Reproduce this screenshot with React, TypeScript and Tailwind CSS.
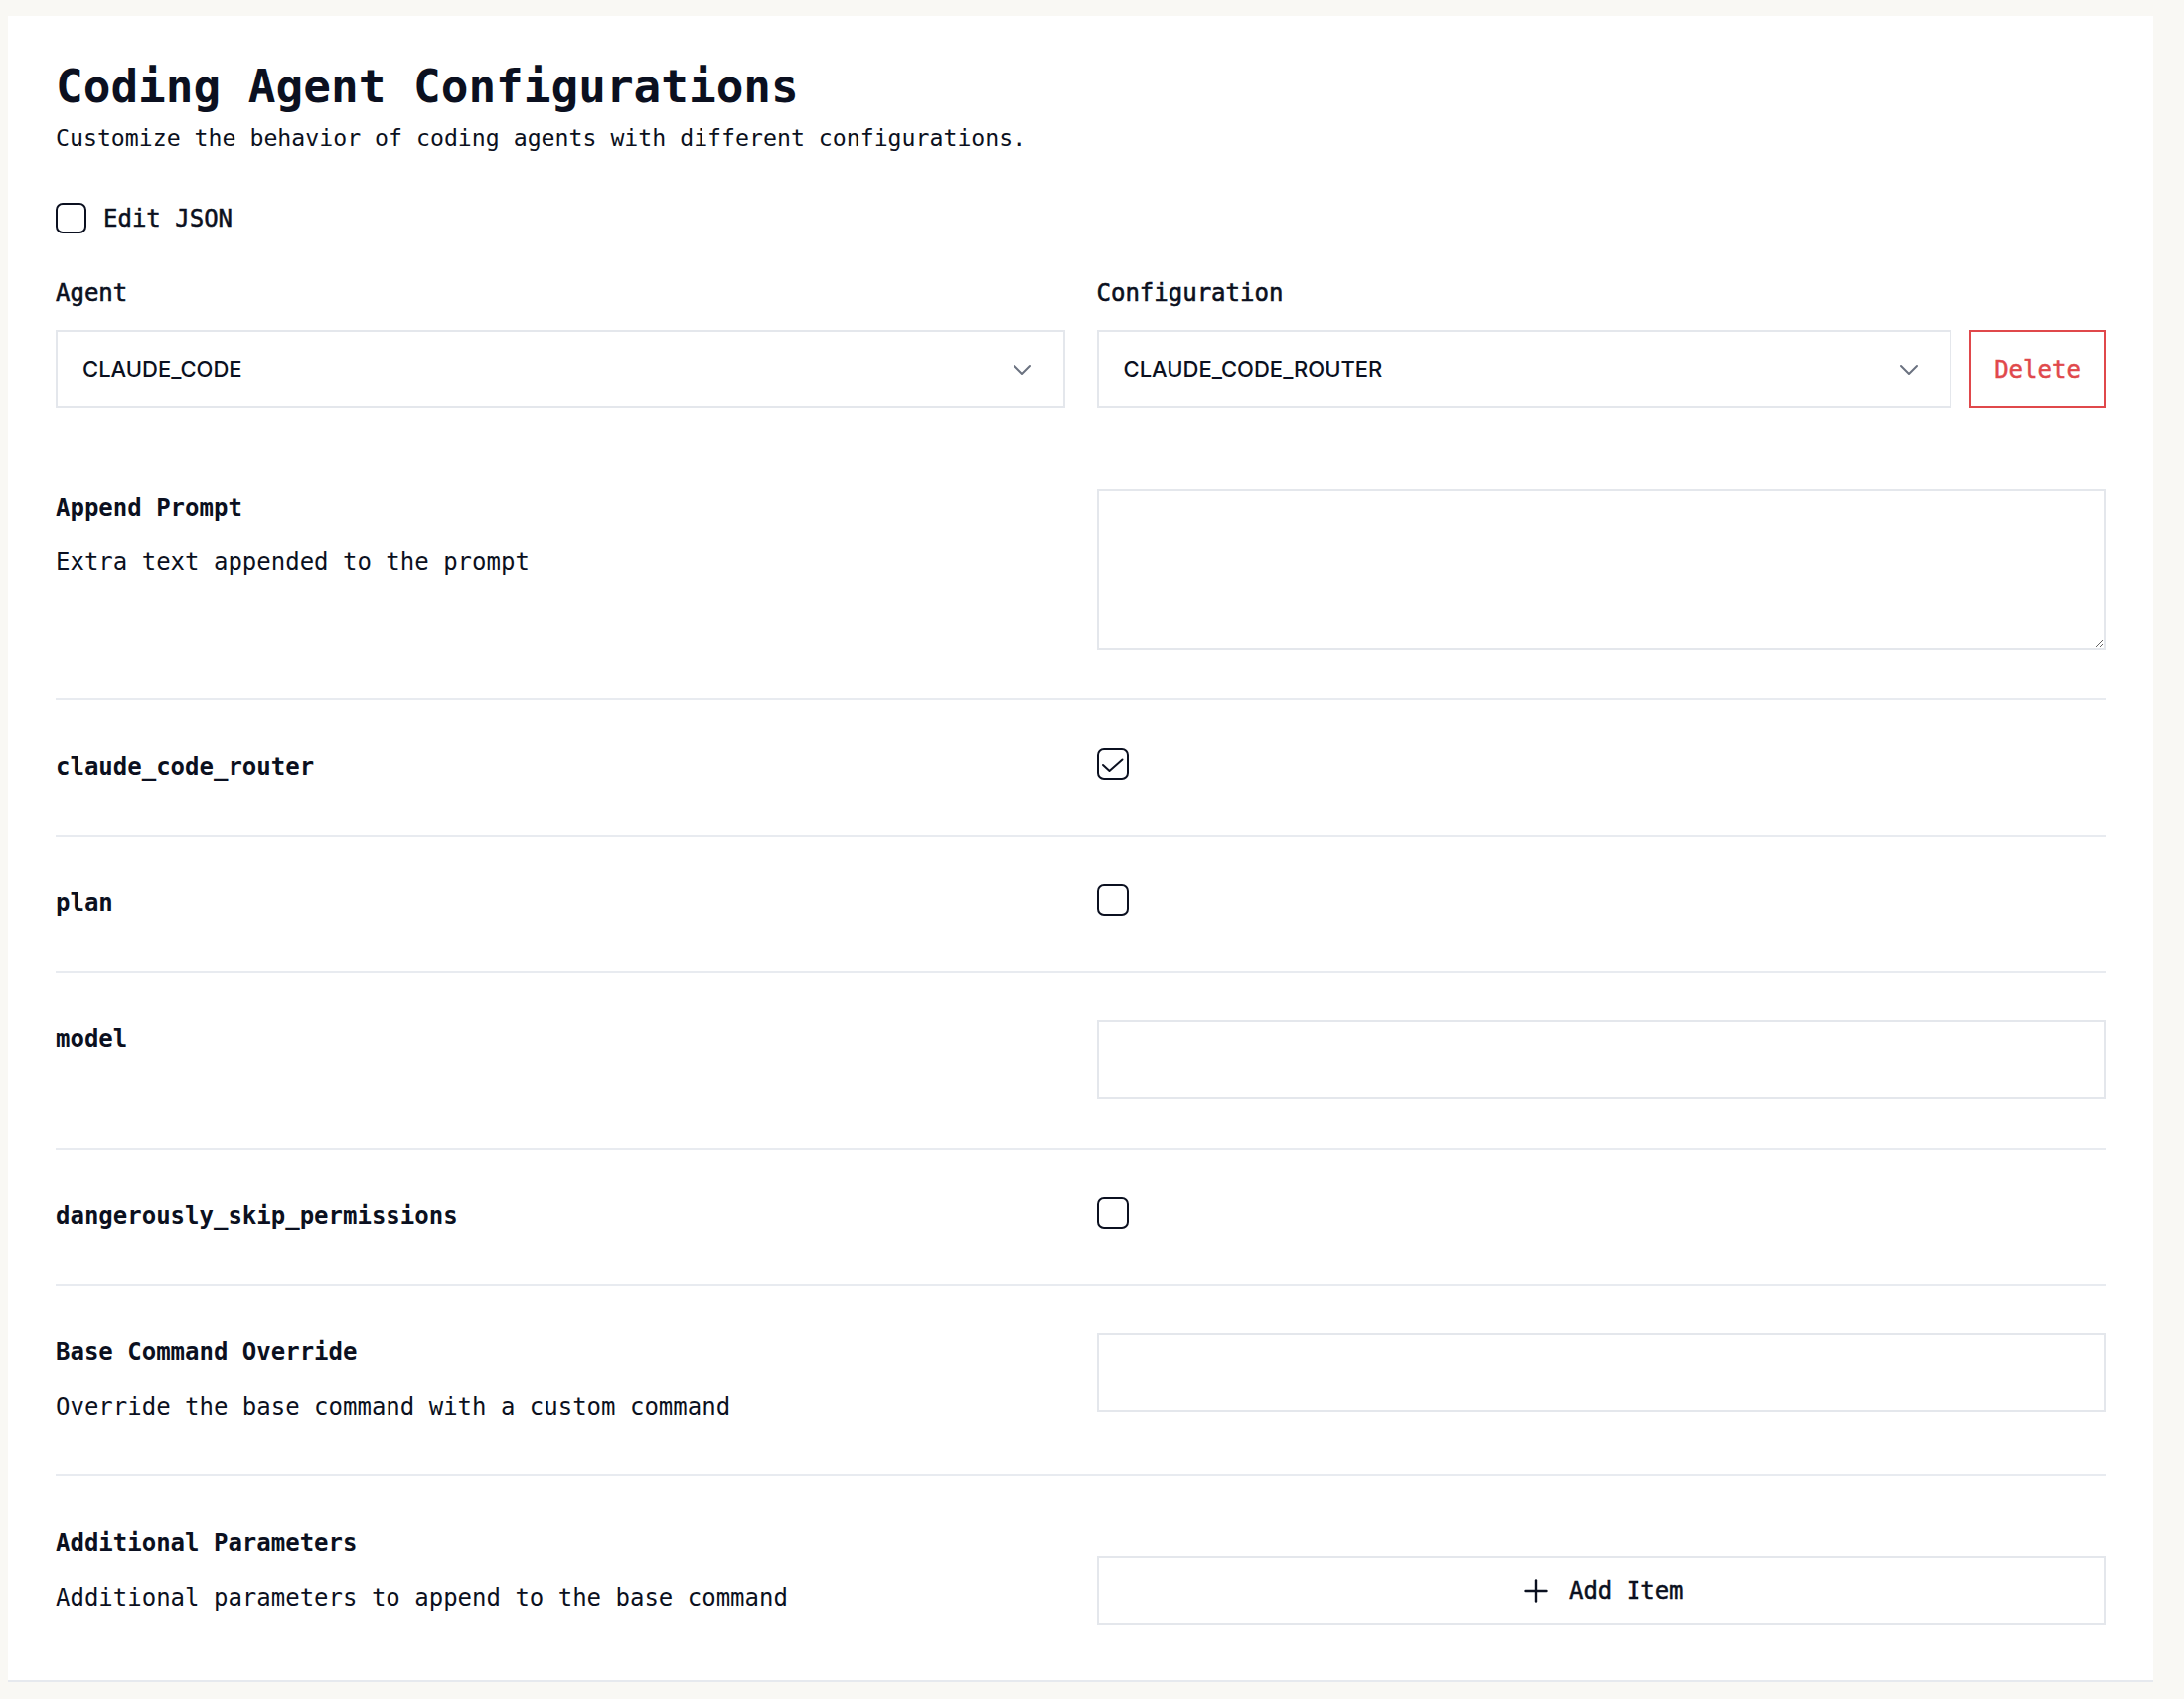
import { ChevronDown, Plus } from "lucide-react";

function Box({ checked = false, size = "w-[32px] h-[32px]" }: { checked?: boolean; size?: string }) {
  return (
    <span
      className={`${size} shrink-0 rounded-[7px] border-[2.5px] border-[#0b1020] bg-white flex items-center justify-center`}
    >
      {checked && (
        <svg width="32" height="32" viewBox="0 0 32 32" fill="none" className="-m-[2.5px]">
          <polyline
            points="6 17 12.5 23 25.5 11.5"
            stroke="#0b1020"
            strokeWidth="2"
            strokeLinecap="round"
            strokeLinejoin="round"
          />
        </svg>
      )}
    </span>
  );
}

function FakeSelect({ value }: { value: string }) {
  return (
    <button className="w-full h-[79px] flex items-center justify-between px-[25px] border-2 border-[#e4e7ec] bg-white text-left">
      <span className="font-['Inter',sans-serif] text-[22px] font-medium text-[#0b1020]">{value}</span>
      <ChevronDown size={32} strokeWidth={1.5} className="text-[#6b7280]" />
    </button>
  );
}

function Row({
  label,
  desc,
  children,
  last = false,
}: {
  label: string;
  desc?: string;
  children: React.ReactNode;
  last?: boolean;
}) {
  return (
    <div className={`grid grid-cols-2 gap-x-[32px] pt-[48px] pb-[49px] ${last ? "" : "border-b-2 border-[#e8ebf0]"}`}>
      <div>
        <div className="text-[24px] leading-[38px] font-bold">{label}</div>
        {desc && <div className="mt-[17px] text-[24px] leading-[38px]">{desc}</div>}
      </div>
      <div>{children}</div>
    </div>
  );
}

export default function App() {
  return (
    <div className="min-h-screen bg-[#f9f8f4] pt-[16px] pl-[8px] pr-[31px]">
      <div className="bg-white border-b-2 border-[#e6e9ee] px-[48px] pt-[43px] pb-[6px] font-['DejaVu_Sans_Mono',monospace] text-[#0b1020]">
        <h1 className="text-[46px] leading-[56px] font-bold">Coding Agent Configurations</h1>
        <p className="mt-[8px] text-[23.2px] leading-[32px]">
          Customize the behavior of coding agents with different configurations.
        </p>

        <label className="mt-[49px] flex items-center gap-[17px] h-[31px]">
          <Box size="w-[31px] h-[31px]" />
          <span className="text-[24px] [-webkit-text-stroke:0.5px_#0b1020]">Edit JSON</span>
        </label>

        <div className="mt-[44px] grid grid-cols-2 gap-x-[32px]">
          <div>
            <div className="text-[24px] leading-[32px] [-webkit-text-stroke:0.6px_#0b1020]">Agent</div>
            <div className="mt-[21px]">
              <FakeSelect value="CLAUDE_CODE" />
            </div>
          </div>
          <div>
            <div className="text-[24px] leading-[32px] [-webkit-text-stroke:0.6px_#0b1020]">Configuration</div>
            <div className="mt-[21px] flex gap-[18px]">
              <div className="flex-1">
                <FakeSelect value="CLAUDE_CODE_ROUTER" />
              </div>
              <button className="w-[137px] h-[79px] border-2 border-[#e0484b] text-[#e0484b] text-[24px] bg-white [-webkit-text-stroke:0.5px_#e0484b]">
                Delete
              </button>
            </div>
          </div>
        </div>

        <div className="mt-[33px]">
          <Row label="Append Prompt" desc="Extra text appended to the prompt">
            <textarea className="block w-full h-[162px] border-2 border-[#e4e7ec] bg-white resize-y outline-none" />
          </Row>
          <Row label="claude_code_router">
            <div className="h-[38px]">
              <Box checked />
            </div>
          </Row>
          <Row label="plan">
            <div className="h-[38px]">
              <Box />
            </div>
          </Row>
          <Row label="model">
            <input className="block w-full h-[79px] border-2 border-[#e4e7ec] bg-white outline-none" />
          </Row>
          <Row label="dangerously_skip_permissions">
            <div className="h-[38px]">
              <Box />
            </div>
          </Row>
          <Row label="Base Command Override" desc="Override the base command with a custom command">
            <input className="block w-full h-[79px] border-2 border-[#e4e7ec] bg-white outline-none" />
          </Row>
          <Row label="Additional Parameters" desc="Additional parameters to append to the base command" last>
            <button className="mt-[32px] w-full h-[70px] flex items-center justify-center gap-[15px] border-2 border-[#e4e7ec] bg-white">
              <Plus size={36} strokeWidth={1.6} className="text-[#0b1020]" />
              <span className="text-[24px] [-webkit-text-stroke:0.5px_#0b1020]">Add Item</span>
            </button>
          </Row>
        </div>
      </div>
    </div>
  );
}
